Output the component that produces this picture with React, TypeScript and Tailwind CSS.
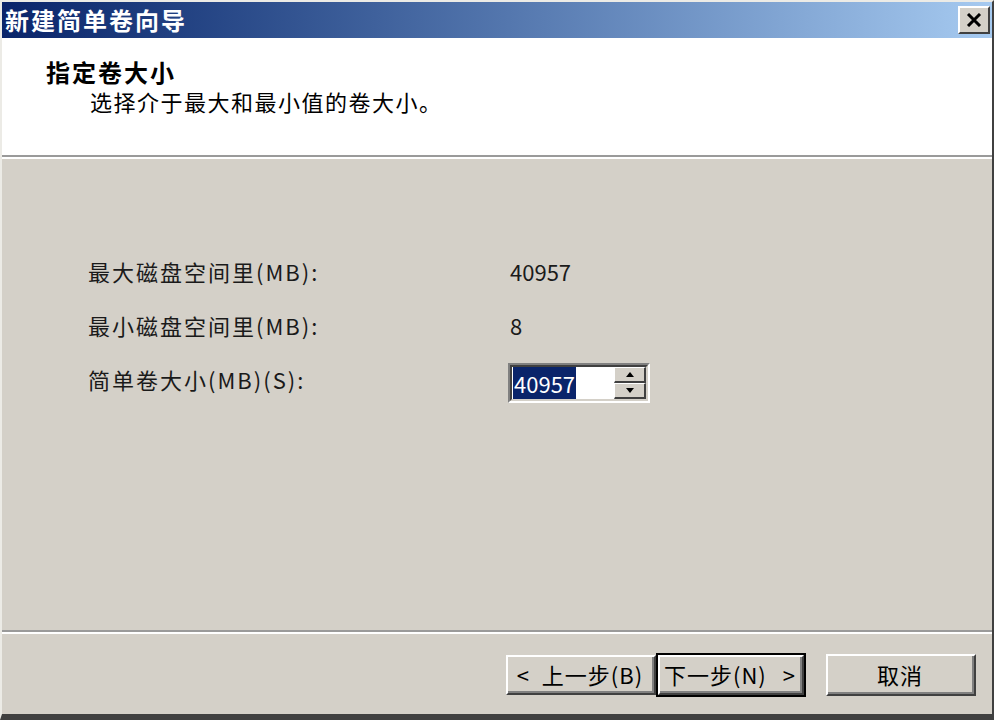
import React from 'react';

const FONT = '"Noto Sans CJK SC", "Liberation Sans", sans-serif';

function RaisedButton({ children, isDefault = false, className = '' }: { children: React.ReactNode; isDefault?: boolean; className?: string }) {
  // classic 3D button, the default one gets an extra black frame
  return (
    <div className={`${isDefault ? 'border-2 border-black' : ''} ${className}`}>
      <div className="h-full border-t-2 border-l-2 border-t-white border-l-white border-r-2 border-b-2 border-r-[#404040] border-b-[#404040] bg-[#d4d0c8]">
        <div className="h-full flex items-center justify-center whitespace-nowrap border-r-2 border-b-2 border-r-[#808080] border-b-[#808080] text-[22px] text-black tracking-[1px]">
          {children}
        </div>
      </div>
    </div>
  );
}

function SpinArrow({ down = false }: { down?: boolean }) {
  return (
    <svg width="8" height="5" viewBox="0 0 8 5">
      {down ? <polygon points="0,0 8,0 4,5" fill="#000" /> : <polygon points="4,0 8,5 0,5" fill="#000" />}
    </svg>
  );
}

export default function App() {
  return (
    <div
      className="w-[994px] h-[720px] flex flex-col bg-[#d4d0c8] border-t-2 border-l-2 border-t-[#ecebe6] border-l-[#ecebe6] border-r-2 border-r-[#404040] border-b-[6px] border-b-[#404040] overflow-hidden"
      style={{ fontFamily: FONT }}
    >
      {/* title bar */}
      <div className="h-[36px] shrink-0 flex items-center justify-between pl-[3px] pr-[2px] bg-linear-to-r from-[#0a246a] to-[#a6caf0]">
        <span className="text-white font-bold text-[24px] leading-none tracking-[2px]">新建简单卷向导</span>
        <div className="w-[32px] h-[28px] border-t-2 border-l-2 border-t-white border-l-white border-r-2 border-b-2 border-r-[#404040] border-b-[#404040] bg-[#d4d0c8] flex items-center justify-center">
          <svg width="16" height="14" viewBox="0 0 16 14">
            <path d="M2 1 L14 13 M14 1 L2 13" stroke="#000" strokeWidth="3" />
          </svg>
        </div>
      </div>

      {/* header */}
      <div className="h-[117px] shrink-0 bg-white pt-[19px] pl-[44px]">
        <div className="text-[24px] font-bold leading-[30px] text-black tracking-[2px]">指定卷大小</div>
        <div className="text-[22px] leading-[28px] text-black pl-[44px] tracking-[1.5px]">选择介于最大和最小值的卷大小。</div>
      </div>
      <div className="h-[2px] shrink-0 bg-[#9a9a9a]" />
      <div className="h-[2px] shrink-0 bg-white" />

      {/* body */}
      <div className="flex-1 pt-[92px] pl-[86px]">
        <div className="grid grid-cols-[422px_auto] gap-y-[14px] text-[22px] text-[#1a1a1a]">
          <div className="h-[40px] flex items-center tracking-[2px]">最大磁盘空间里(MB):</div>
          <div className="h-[40px] flex items-center">40957</div>
          <div className="h-[40px] flex items-center tracking-[2px]">最小磁盘空间里(MB):</div>
          <div className="h-[40px] flex items-center">8</div>
          <div className="h-[40px] flex items-center tracking-[2px]">简单卷大小(MB)(S):</div>
          <div className="h-[40px] flex items-center pt-[8px] -ml-[2px]">
            <div className="w-[142px] h-[40px] border-t-2 border-l-2 border-t-[#808080] border-l-[#808080] border-r-2 border-b-2 border-r-white border-b-white">
              <div className="h-full flex items-center bg-white border-t-2 border-l-2 border-t-[#404040] border-l-[#404040] border-r-2 border-b-2 border-r-[#d4d0c8] border-b-[#d4d0c8]">
                <div className="flex-1 pl-[1px]">
                  <span className="bg-[#0a246a] text-white text-[22px] leading-[28px] px-[1px]">40957</span>
                </div>
                <div className="w-[32px] h-full flex flex-col">
                  <div className="flex-1 flex items-center justify-center bg-[#d4d0c8] border-t border-l border-t-white border-l-white border-r-2 border-b-2 border-r-[#404040] border-b-[#404040]">
                    <SpinArrow />
                  </div>
                  <div className="flex-1 flex items-center justify-center bg-[#d4d0c8] border-t border-l border-t-white border-l-white border-r-2 border-b-2 border-r-[#404040] border-b-[#404040]">
                    <SpinArrow down />
                  </div>
                </div>
              </div>
            </div>
          </div>
        </div>
      </div>

      {/* footer */}
      <div className="h-[2px] shrink-0 bg-[#9a9a9a]" />
      <div className="h-[2px] shrink-0 bg-white" />
      <div className="h-[80px] shrink-0 flex items-start pt-[19px] pl-[504px]">
        <RaisedButton className="w-[150px] h-[42px] pt-[2px]">
          <span>&lt;&nbsp;&nbsp;上一步(B)</span>
        </RaisedButton>
        <RaisedButton isDefault className="w-[150px] h-[44px]">
          <span>下一步(N)</span>
          <span className="ml-[16px]">&gt;</span>
        </RaisedButton>
        <RaisedButton className="w-[150px] h-[42px] ml-[20px] mt-[1px]">
          <span>取消</span>
        </RaisedButton>
      </div>
    </div>
  );
}
